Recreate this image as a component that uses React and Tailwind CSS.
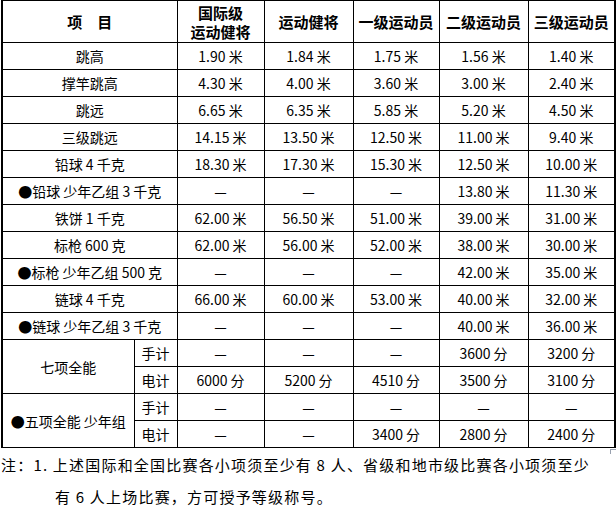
import React from 'react';

const font = { fontFamily: '"Noto Sans CJK SC", "Noto Sans", sans-serif' };

const rows = [
  ['跳高', '1.90 米', '1.84 米', '1.75 米', '1.56 米', '1.40 米'],
  ['撑竿跳高', '4.30 米', '4.00 米', '3.60 米', '3.00 米', '2.40 米'],
  ['跳远', '6.65 米', '6.35 米', '5.85 米', '5.20 米', '4.50 米'],
  ['三级跳远', '14.15 米', '13.50 米', '12.50 米', '11.00 米', '9.40 米'],
  ['铅球 4 千克', '18.30 米', '17.30 米', '15.30 米', '12.50 米', '10.00 米'],
  ['●铅球 少年乙组 3 千克', '—', '—', '—', '13.80 米', '11.30 米'],
  ['铁饼 1 千克', '62.00 米', '56.50 米', '51.00 米', '39.00 米', '31.00 米'],
  ['标枪 600 克', '62.00 米', '56.00 米', '52.00 米', '38.00 米', '30.00 米'],
  ['●标枪 少年乙组 500 克', '—', '—', '—', '42.00 米', '35.00 米'],
  ['链球 4 千克', '66.00 米', '60.00 米', '53.00 米', '40.00 米', '32.00 米'],
  ['●链球 少年乙组 3 千克', '—', '—', '—', '40.00 米', '36.00 米'],
];

const combined = [
  {
    name: '七项全能',
    sub: [
      ['手计', '—', '—', '—', '3600 分', '3200 分'],
      ['电计', '6000 分', '5200 分', '4510 分', '3500 分', '3100 分'],
    ],
  },
  {
    name: '●五项全能 少年组',
    sub: [
      ['手计', '—', '—', '—', '—', '—'],
      ['电计', '—', '—', '3400 分', '2800 分', '2400 分'],
    ],
  },
];

const td = 'border border-black text-center align-middle p-0 text-[14px] leading-none whitespace-nowrap';

export default function App() {
  return (
    <div className="w-[616px] h-[506px] bg-white text-black relative overflow-hidden" style={font}>
      <table className="table-fixed border-collapse w-[613px] ml-[1px] border-l-2 border-r-2 border-black">
        <colgroup>
          <col className="w-[132px]" />
          <col className="w-[43px]" />
          <col className="w-[87px]" />
          <col className="w-[89px]" />
          <col className="w-[86px]" />
          <col className="w-[89px]" />
          <col className="w-[87px]" />
        </colgroup>
        <thead>
          <tr className="h-[42px]">
            <th colSpan={2} className={`${td} font-bold text-[15px]`}>项　目</th>
            <th className={`${td} font-bold text-[15px]`}>
              <div className="leading-[19px]">国际级</div>
              <div className="leading-[19px]">运动健将</div>
            </th>
            <th className={`${td} font-bold text-[15px]`}>运动健将</th>
            <th className={`${td} font-bold text-[15px]`}>一级运动员</th>
            <th className={`${td} font-bold text-[15px]`}>二级运动员</th>
            <th className={`${td} font-bold text-[15px]`}>三级运动员</th>
          </tr>
        </thead>
        <tbody>
          {rows.map((r, i) => (
            <tr key={i} className="h-[27px]">
              <td colSpan={2} className={`${td} font-normal`}>{r[0]}</td>
              {r.slice(1).map((v, j) => (
                <td key={j} className={td}>{v}</td>
              ))}
            </tr>
          ))}
          {combined.map((c, i) =>
            c.sub.map((s, k) => (
              <tr key={`${i}-${k}`} className="h-[27px]">
                {k === 0 && (
                  <td rowSpan={2} className={td}>{c.name}</td>
                )}
                {s.map((v, j) => (
                  <td key={j} className={td}>{v}</td>
                ))}
              </tr>
            ))
          )}
        </tbody>
      </table>

      <div className="text-[15px] leading-[20px] tracking-[1.2px] whitespace-nowrap">
        <p className="m-0 mt-[7px] pl-[1px]">注：1. 上述国际和全国比赛各小项须至少有 8 人、省级和地市级比赛各小项须至少</p>
        <p className="m-0 mt-[12px] pl-[55px]">有 6 人上场比赛，方可授予等级称号。</p>
      </div>

      <span className="absolute left-[610px] top-[449px] w-[6px] h-[5px] border-t border-l border-gray-400" />
    </div>
  );
}
